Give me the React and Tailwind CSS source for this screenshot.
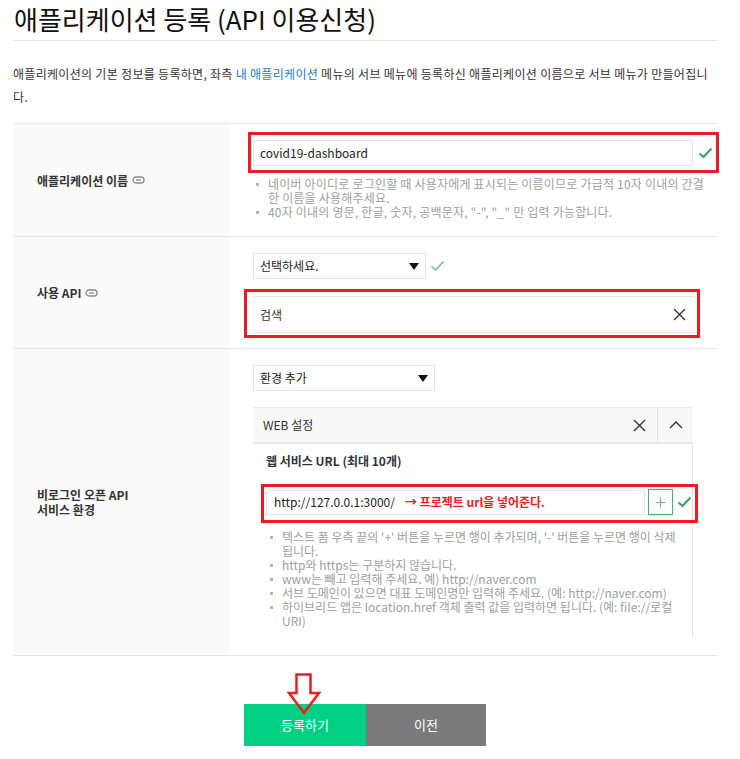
import React from 'react';

const font = { fontFamily: '"Noto Sans CJK KR", "Noto Sans", sans-serif' };

const LinkIcon = () => (
  <svg width="13" height="8" viewBox="0 0 13 8" className="ml-[4px] inline-block">
    <rect x="1" y="1" width="11" height="6" rx="3" fill="none" stroke="#888" strokeWidth="1.3" />
    <line x1="4" y1="4" x2="9" y2="4" stroke="#888" strokeWidth="1.3" />
  </svg>
);

const Check = ({ light }) => (
  <svg width="15" height="12" viewBox="0 0 15 12">
    <path d="M1.5 6.5 L5.5 10 L13.5 1.5" fill="none" stroke={light ? '#6cc28c' : '#3aa866'} strokeWidth={light ? 1.6 : 2.2} />
  </svg>
);

const Cross = ({ size = 13 }) => (
  <svg width={size} height={size} viewBox="0 0 13 13">
    <path d="M1 1 L12 12 M12 1 L1 12" stroke="#333" strokeWidth="1.4" fill="none" />
  </svg>
);

const Triangle = () => (
  <svg width="10" height="7" viewBox="0 0 10 7">
    <path d="M0 0 H10 L5 7 Z" fill="#111" />
  </svg>
);

const RedBox = ({ className }) => (
  <div className={`absolute border-[3px] border-[#ec1c24] pointer-events-none ${className}`} />
);

const Hints = ({ items, className }) => (
  <ul className={`text-[12px] leading-[14px] text-[#a0a0a0] ${className}`}>
    {items.map((t, i) => (
      <li key={i} className="flex">
        <span className="mt-[6px] mr-[9px] h-[3px] w-[3px] shrink-0 bg-[#b5b5b5]" />
        <span>{t}</span>
      </li>
    ))}
  </ul>
);

const Label = ({ children }) => (
  <div className="flex items-center bg-[#fafafa] pl-[24px] text-[12px] font-bold leading-[15px] text-[#333]">
    {children}
  </div>
);

export default function App() {
  return (
    <div className="min-h-screen bg-white px-[13px]" style={font}>
      <div className="w-[704px]">
        <h1 className="border-b border-[#e5e5e5] pt-[3px] pb-[6px] pl-[1px] text-[26px] font-normal leading-[31px] text-[#111]">
          애플리케이션 등록 (API 이용신청)
        </h1>

        <p className="mt-[21px] text-[12px] leading-[23px] tracking-[0.3px] text-[#333]">
          애플리케이션의 기본 정보를 등록하면, 좌측 <span className="text-[#1a7bd0]">내 애플리케이션</span> 메뉴의 서브 메뉴에 등록하신 애플리케이션 이름으로 서브 메뉴가 만들어집니다.
        </p>

        <div className="mt-[15px] border-t border-[#e5e5e5]">
          {/* row 1 */}
          <div className="grid grid-cols-[216px_1fr] border-b border-[#e5e5e5]">
            <Label>
              애플리케이션 이름 <LinkIcon />
            </Label>
            <div className="pl-[24px] pt-[16px] pb-[17px]">
              <div className="relative flex items-center">
                <div className="flex h-[26px] w-[440px] items-center border border-[#e3e3e3] pl-[6px] text-[12px] text-[#222]">
                  covid19-dashboard
                </div>
                <div className="ml-[5px]">
                  <Check />
                </div>
                <RedBox className="left-[-5px] top-[-8px] h-[41px] w-[471px]" />
              </div>
              <Hints
                className="mt-[11px] w-[452px] pl-[3px] tracking-[0.2px]"
                items={[
                  '네이버 아이디로 로그인할 때 사용자에게 표시되는 이름이므로 가급적 10자 이내의 간결한 이름을 사용해주세요.',
                  '40자 이내의 영문, 한글, 숫자, 공백문자, "-", "_" 만 입력 가능합니다.',
                ]}
              />
            </div>
          </div>

          {/* row 2 */}
          <div className="grid grid-cols-[216px_1fr] border-b border-[#e5e5e5]">
            <Label>
              사용 API <LinkIcon />
            </Label>
            <div className="pl-[24px] pt-[16px] pb-[15px]">
              <div className="flex items-center">
                <div className="flex h-[26px] w-[173px] items-center justify-between border border-[#e3e3e3] pl-[6px] pr-[6px] text-[12px] text-[#222]">
                  선택하세요.
                  <Triangle />
                </div>
                <div className="ml-[4px]">
                  <Check light />
                </div>
              </div>
              <div className="relative mt-[17px]">
                <div className="flex h-[37px] w-[440px] items-center justify-between border-y border-[#e3e3e3] pl-[7px] pr-[7px] text-[12px] text-[#333]">
                  검색
                  <Cross />
                </div>
                <RedBox className="left-[-9px] top-[-7px] h-[49px] w-[456px]" />
              </div>
            </div>
          </div>

          {/* row 3 */}
          <div className="grid grid-cols-[216px_1fr] border-b border-[#e5e5e5]">
            <Label>
              비로그인 오픈 API
              <br />
              서비스 환경
            </Label>
            <div className="pl-[24px] pt-[16px] pb-[17px]">
              <div className="flex h-[26px] w-[182px] items-center justify-between border border-[#e3e3e3] pl-[6px] pr-[6px] text-[12px] text-[#222]">
                환경 추가
                <Triangle />
              </div>
              <div className="mt-[16px] w-[440px]">
                <div className="flex h-[37px] items-center border-t border-b-2 border-[#e8e8e8] bg-[#f8f8f8] text-[12px] text-[#333]">
                  <span className="flex-1 pl-[10px]">WEB 설정</span>
                  <div className="flex h-full w-[36px] items-center justify-center">
                    <Cross />
                  </div>
                  <div className="flex h-full w-[36px] items-center justify-center border-l border-[#e3e3e3]">
                    <svg width="14" height="8" viewBox="0 0 14 8">
                      <path d="M1 7 L7 1 L13 7" fill="none" stroke="#333" strokeWidth="1.4" />
                    </svg>
                  </div>
                </div>
                <div className="h-[194px] border-r border-[#e3e3e3] pl-[13px] pt-[8px]">
                  <div className="text-[12px] font-bold leading-[18px] text-[#333]">웹 서비스 URL (최대 10개)</div>
                  <div className="relative mt-[19px] flex items-center">
                    <div className="flex h-[25px] w-[379px] items-center border border-[#e3e3e3] pl-[7px] text-[12px] text-[#222]">
                      http://127.0.0.1:3000/
                      <span className="ml-[10px] font-bold text-[#ec1c24]">→ 프로젝트 url을 넣어준다.</span>
                    </div>
                    <div className="ml-[3px] flex h-[26px] w-[25px] items-center justify-center border border-[#4caf6a]">
                      <svg width="11" height="11" viewBox="0 0 11 11">
                        <path d="M5.5 0.5 V10.5 M0.5 5.5 H10.5" stroke="#6dbb7f" strokeWidth="1.2" />
                      </svg>
                    </div>
                    <div className="ml-[4px]">
                      <Check />
                    </div>
                    <RedBox className="left-[-5px] top-[-5px] h-[39px] w-[437px]" />
                  </div>
                  <Hints
                    className="mt-[15px] w-[410px] pl-[4px]"
                    items={[
                      "텍스트 폼 우측 끝의 '+' 버튼을 누르면 행이 추가되며, '-' 버튼을 누르면 행이 삭제됩니다.",
                      'http와 https는 구분하지 않습니다.',
                      'www는 빼고 입력해 주세요. 예) http://naver.com',
                      '서브 도메인이 있으면 대표 도메인명만 입력해 주세요. (예: http://naver.com)',
                      '하이브리드 앱은 location.href 객체 출력 값을 입력하면 됩니다. (예: file://로컬URI)',
                    ]}
                  />
                </div>
              </div>
            </div>
          </div>
        </div>

        <div className="relative mt-[48px] flex justify-center">
          <button className="h-[42px] w-[122px] bg-[#00d084] text-[13px] text-white">등록하기</button>
          <button className="h-[42px] w-[120px] bg-[#7a7a7a] text-[13px] text-white">이전</button>
          <svg
            width="38"
            height="44"
            viewBox="0 0 38 44"
            className="pointer-events-none absolute left-[272px] top-[-31px]"
          >
            <path d="M11.5 1.5 H25.5 V20 H34 L19 40 L4 20 H11.5 Z" fill="none" stroke="#ec1c24" strokeWidth="2.5" />
          </svg>
        </div>
      </div>
    </div>
  );
}
